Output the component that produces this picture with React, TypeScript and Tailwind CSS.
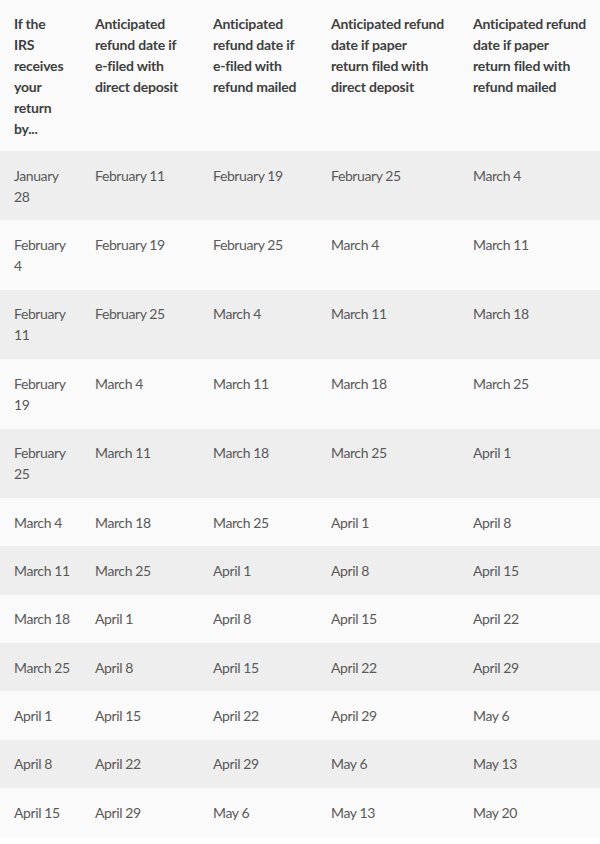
import React from "react";

const header: string[][] = [
  ["If the", "IRS", "receives", "your", "return", "by..."],
  ["Anticipated", "refund date if", "e-filed with", "direct deposit"],
  ["Anticipated", "refund date if", "e-filed with", "refund mailed"],
  ["Anticipated refund", "date if paper", "return filed with", "direct deposit"],
  ["Anticipated refund", "date if paper", "return filed with", "refund mailed"],
];

const rows: string[][][] = [
  [["January", "28"], ["February 11"], ["February 19"], ["February 25"], ["March 4"]],
  [["February", "4"], ["February 19"], ["February 25"], ["March 4"], ["March 11"]],
  [["February", "11"], ["February 25"], ["March 4"], ["March 11"], ["March 18"]],
  [["February", "19"], ["March 4"], ["March 11"], ["March 18"], ["March 25"]],
  [["February", "25"], ["March 11"], ["March 18"], ["March 25"], ["April 1"]],
  [["March 4"], ["March 18"], ["March 25"], ["April 1"], ["April 8"]],
  [["March 11"], ["March 25"], ["April 1"], ["April 8"], ["April 15"]],
  [["March 18"], ["April 1"], ["April 8"], ["April 15"], ["April 22"]],
  [["March 25"], ["April 8"], ["April 15"], ["April 22"], ["April 29"]],
  [["April 1"], ["April 15"], ["April 22"], ["April 29"], ["May 6"]],
  [["April 8"], ["April 22"], ["April 29"], ["May 6"], ["May 13"]],
  [["April 15"], ["April 29"], ["May 6"], ["May 13"], ["May 20"]],
];

const widths = ["w-[81px]", "w-[118px]", "w-[118px]", "w-[142px]", "w-[141px]"];

function Lines({ lines }: { lines: string[] }) {
  return (
    <>
      {lines.map((l, i) => (
        <div key={i} className="whitespace-nowrap">
          {l}
        </div>
      ))}
    </>
  );
}

export default function App() {
  return (
    <div
      className="w-[600px] min-h-[844px] bg-white"
      style={{ fontFamily: "Lato, 'Open Sans', sans-serif" }}
    >
      <table className="w-[600px] border-collapse table-fixed">
        <colgroup>
          {widths.map((w, i) => (
            <col key={i} className={w} />
          ))}
        </colgroup>
        <thead>
          <tr className="bg-[#fafafa]">
            {header.map((h, i) => (
              <th
                key={i}
                className="text-left align-top font-bold text-[14px] tracking-[-0.2px] leading-[21px] text-[#3f3f3f] pl-[14px] pr-0 pt-[12.5px] pb-[12.5px]"
              >
                <Lines lines={h} />
              </th>
            ))}
          </tr>
        </thead>
        <tbody>
          {rows.map((r, ri) => (
            <tr key={ri} className={ri % 2 === 0 ? "bg-[#eeeeee]" : "bg-[#fafafa]"}>
              {r.map((c, ci) => (
                <td
                  key={ci}
                  className="text-left align-top text-[14px] tracking-[-0.4px] leading-[21px] text-[#595959] pl-[14px] pr-0 py-[13.7px]"
                >
                  <Lines lines={c} />
                </td>
              ))}
            </tr>
          ))}
        </tbody>
      </table>
    </div>
  );
}
